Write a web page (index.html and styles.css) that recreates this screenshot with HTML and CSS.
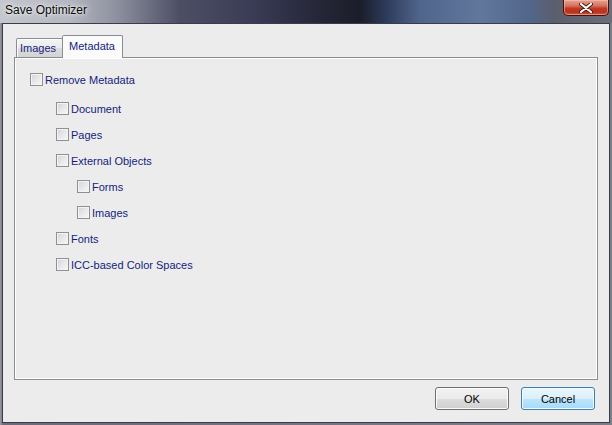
FILE: index.html
```html
<!DOCTYPE html>
<html>
<head>
<meta charset="utf-8">
<link rel="stylesheet" href="styles.css">
</head>
<body>
<div class="window">
  <div class="titlebar">
    <span class="title">Save Optimizer</span>
    <button class="close" aria-label="Close">
      <svg width="14" height="10" viewBox="0 0 14 10"><path d="M2 1 L12 9 M12 1 L2 9" stroke="#4a1a12" stroke-width="4" stroke-linecap="round"/><path d="M2 1 L12 9 M12 1 L2 9" stroke="#ffffff" stroke-width="2.2" stroke-linecap="round"/></svg>
    </button>
  </div>
  <div class="client">
    <div class="tabs">
      <div class="tab">Images</div>
      <div class="tab active">Metadata</div>
    </div>
    <div class="pane">
      <div class="opt lvl0"><span class="cb"></span><span>Remove Metadata</span></div>
      <div class="group">
        <div class="opt lvl1"><span class="cb"></span><span>Document</span></div>
        <div class="opt lvl1"><span class="cb"></span><span>Pages</span></div>
        <div class="opt lvl1"><span class="cb"></span><span>External Objects</span></div>
        <div class="opt lvl2"><span class="cb"></span><span>Forms</span></div>
        <div class="opt lvl2"><span class="cb"></span><span>Images</span></div>
        <div class="opt lvl1"><span class="cb"></span><span>Fonts</span></div>
        <div class="opt lvl1"><span class="cb"></span><span>ICC-based Color Spaces</span></div>
      </div>
    </div>
    <div class="buttons">
      <button class="btn">OK</button>
      <button class="btn hot">Cancel</button>
    </div>
  </div>
</div>
</body>
</html>
```
FILE: styles.css
```css
*, *::before, *::after {
  box-sizing: border-box;
}
html, body {
  margin: 0;
  padding: 0;
}
body {
  width: 612px;
  height: 425px;
  overflow: hidden;
  font-family: "Liberation Sans", Arial, sans-serif;
}
.window {
  width: 612px;
  height: 425px;
  display: flex;
  flex-direction: column;
  background: linear-gradient(90deg, #9a9da5 0px, #6a6d78 3px, #7c7f88 100%);
}
.titlebar {
  height: 23px;
  flex: none;
  display: flex;
  align-items: flex-start;
  background: linear-gradient(90deg, #c4c7cd 0px, #b4b7bf 70px, #8a8d9c 120px, #4c4f64 180px, #373a52 260px, #2a2c40 300px, #1b1d29 360px, #2c3a58 385px, #50658c 420px, #61779c 480px, #52668a 530px, #5b5e6c 555px, #6c6f7a 612px);
}
.title {
  font-size: 12px;
  line-height: 20px;
  padding-left: 5px;
  color: #0a0a0a;
  text-shadow: 0 0 6px rgba(255,255,255,0.9), 0 0 3px rgba(255,255,255,0.8);
}
.close {
  margin-left: auto;
  margin-right: 3px;
  width: 46px;
  height: 16px;
  padding: 0;
  border: 1px solid #47120b;
  border-top: none;
  border-radius: 0 0 5px 5px;
  background: linear-gradient(180deg, #e6a494 0%, #d5705c 40%, #c13a24 55%, #b8321f 80%, #cf5a3e 100%);
  box-shadow: inset 0 0 0 1px rgba(255, 200, 180, 0.5);
  display: flex;
  align-items: center;
  justify-content: center;
}
.close svg { display: block; }
.client {
  margin: 0 2px 2px 2px;
  flex: 1;
  border: 1px solid #3a3d47;
  background: #ececec;
  padding: 11px 11px 0 11px;
  display: flex;
  flex-direction: column;
}
.tabs {
  height: 22px;
  flex: none;
  display: flex;
  align-items: flex-end;
  padding-left: 2px;
  position: relative;
  z-index: 1;
}
.tab {
  font-size: 11px;
  color: #141c80;
  height: 19px;
  line-height: 18px;
  padding: 0 6px 0 3px;
  border: 1px solid #898c95;
  border-bottom: none;
  border-radius: 2px 2px 0 0;
  background: linear-gradient(180deg, #f3f3f3 0%, #ebebeb 50%, #dcdcdc 51%, #d3d3d3 100%);
  box-shadow: inset 1px 1px 0 #ffffff;
}
.tab.active {
  height: 23px;
  line-height: 20px;
  padding: 0 7px 0 6px;
  margin-left: -1px;
  margin-bottom: -1px;
  background: #fbfbfb;
  box-shadow: none;
}
.pane {
  height: 323px;
  flex: none;
  border: 1px solid #898c95;
  background: #ececec;
  box-shadow: inset 1px 1px 0 #ffffff, inset -1px -1px 0 #ffffff;
  padding: 15px 0 0 15px;
}
.opt {
  display: flex;
  align-items: center;
  height: 13px;
  font-size: 11px;
  color: #141c80;
  gap: 2px;
}
.group {
  display: flex;
  flex-direction: column;
  gap: 13px;
  margin-top: 16px;
}
.lvl1 { padding-left: 26px; }
.lvl2 { padding-left: 47px; }
.cb {
  width: 13px;
  height: 13px;
  flex: none;
  border: 1px solid #8e9094;
  background: linear-gradient(135deg, #d0d3d8 0%, #e6e8ea 50%, #f7f7f7 100%);
  box-shadow: inset 0 0 0 1px #f4f4f4;
}
.buttons {
  display: flex;
  justify-content: flex-end;
  gap: 12px;
  padding: 7px 3px 0 0;
}
.btn {
  width: 74px;
  height: 23px;
  padding: 0;
  font-family: "Liberation Sans", Arial, sans-serif;
  font-size: 11px;
  color: #000000;
  border: 1px solid #707070;
  border-radius: 3px;
  background: linear-gradient(180deg, #f2f2f2 0%, #ebebeb 50%, #dddddd 51%, #cfcfcf 100%);
  box-shadow: inset 0 0 0 1px #fbfbfb;
}
.btn.hot {
  border-color: #3c7fb1;
  background: linear-gradient(180deg, #eaf6fd 0%, #d9f0fc 50%, #bee6fd 51%, #a7d9f5 100%);
  box-shadow: inset 0 0 0 1px #f4fbff;
}
```
